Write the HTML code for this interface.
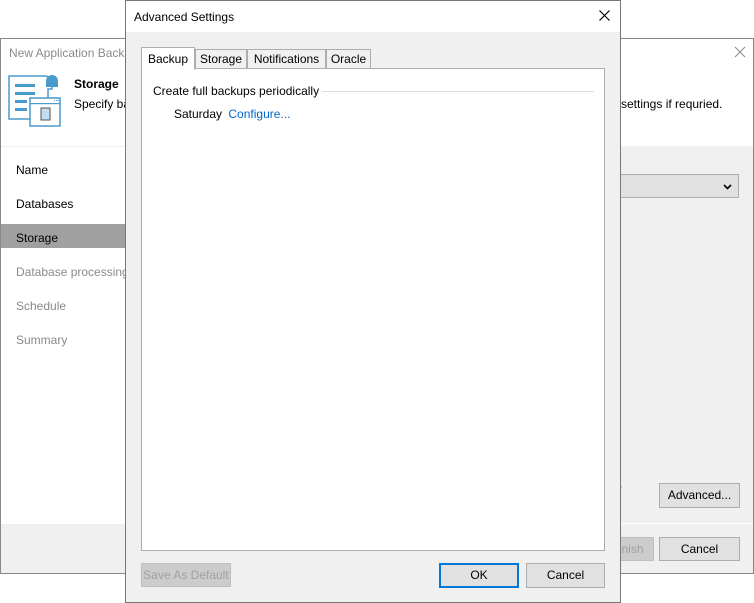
<!DOCTYPE html>
<html><head><style>
*{box-sizing:border-box;margin:0;padding:0}
body{width:754px;height:603px;background:#fff;position:relative;overflow:hidden;font-family:"Liberation Sans",sans-serif;font-size:12px;color:#000}
.a{position:absolute}
.btn{position:absolute;background:#e1e1e1;border:1px solid #adadad;text-align:center;font-size:12px;line-height:22px}
</style></head><body>
<!-- background window -->
<div class="a" style="left:0;top:38px;width:754px;height:536px;border:1px solid #888;background:#f0f0f0">
  <div class="a" style="left:0;top:0;width:752px;height:107px;background:#fff"></div>
  <div class="a" style="left:8px;top:7px;color:#8a8a8a;font-size:12px">New Application Backup</div>
  <svg class="a" style="left:733px;top:7px" width="12" height="12"><path d="M1 1L11 11M11 1L1 11" stroke="#888" stroke-width="1"/></svg>
  <svg class="a" style="left:6px;top:34px" width="54" height="56" viewBox="0 0 54 56">
    <path d="M2 3 h36 a7 7 0 0 1 7 7 v6 h-4 v30 h-39 z" fill="#fff" stroke="#4a9acb" stroke-width="1.5"/>
    <path d="M39 14 v-6 a6 6 0 0 1 12 0 v6z" fill="#4a9acb"/>
    <rect x="8" y="11" width="20" height="3" fill="#4a9acb"/>
    <rect x="8" y="19" width="20" height="3" fill="#4a9acb"/>
    <rect x="8" y="27" width="12" height="3" fill="#4a9acb"/>
    <rect x="8" y="35" width="12" height="3" fill="#4a9acb"/>
    <rect x="23" y="25" width="30" height="28" fill="#fff" stroke="#4a9acb" stroke-width="1.5"/>
    <rect x="47" y="27" width="1" height="1" fill="#4a9acb"/><rect x="49" y="27" width="1" height="1" fill="#4a9acb"/><rect x="51" y="27" width="1" height="1" fill="#4a9acb"/>
    <rect x="23" y="30" width="30" height="1.2" fill="#4a9acb"/>
    <rect x="34" y="35" width="9" height="12" fill="#c4dcef" stroke="#555"/>
  </svg>
  <div class="a" style="left:73px;top:38px;font-weight:bold">Storage</div>
  <div class="a" style="left:73px;top:58px">Specify backup</div>
  <div class="a" style="left:620px;top:58px">settings if requried.</div>
  <div class="a" style="left:0;top:108px;width:124px;height:376px;background:#fff"></div>
  <div class="a" style="left:15px;top:124px">Name</div>
  <div class="a" style="left:15px;top:158px">Databases</div>
  <div class="a" style="left:0;top:185px;width:124px;height:24px;background:#a0a0a0"></div>
  <div class="a" style="left:15px;top:192px">Storage</div>
  <div class="a" style="left:15px;top:226px;color:#8a8a8a">Database processing</div>
  <div class="a" style="left:15px;top:260px;color:#8a8a8a">Schedule</div>
  <div class="a" style="left:15px;top:294px;color:#8a8a8a">Summary</div>
  <div class="a" style="left:610px;top:135px;width:128px;height:24px;background:#e1e1e1;border:1px solid #adadad"></div>
  <svg class="a" style="left:722px;top:145px" width="9" height="6"><path d="M1 1L4.5 4.5L8 1" stroke="#000" stroke-width="1.6" fill="none"/></svg>
  <div class="a" style="left:610px;top:443px">er</div>
  <div class="btn" style="left:658px;top:444px;width:81px;height:25px">Advanced...</div>
  <div class="a" style="left:0;top:484px;width:752px;height:1px;background:#fff"></div>
  <div class="btn" style="left:600px;top:498px;width:53px;height:24px;background:#ccc;border-color:#bfbfbf;color:#a0a0a0">Finish</div>
  <div class="btn" style="left:658px;top:498px;width:81px;height:24px">Cancel</div>
</div>
<!-- dialog -->
<div class="a" style="left:125px;top:0;width:496px;height:603px;border:1px solid #777;background:#f0f0f0">
  <div class="a" style="left:0;top:0;width:494px;height:31px;background:#fff"></div>
  <div class="a" style="left:8px;top:9px">Advanced Settings</div>
  <svg class="a" style="left:473px;top:9px" width="11" height="11"><path d="M0.5 0.5L10.5 10.5M10.5 0.5L0.5 10.5" stroke="#000" stroke-width="1.2"/></svg>
  <div class="a" style="left:15px;top:67px;width:464px;height:483px;background:#fff;border:1px solid #adadad"></div>
  <div class="a" style="left:15px;top:46px;width:54px;height:23px;background:#fff;border:1px solid #adadad;border-bottom:none;text-align:center;line-height:22px">Backup</div>
  <div class="a" style="left:69px;top:48px;width:52px;height:20px;background:#f0f0f0;border:1px solid #adadad;text-align:center;line-height:19px">Storage</div>
  <div class="a" style="left:121px;top:48px;width:79px;height:20px;background:#f0f0f0;border:1px solid #adadad;text-align:center;line-height:19px">Notifications</div>
  <div class="a" style="left:200px;top:48px;width:45px;height:20px;background:#f0f0f0;border:1px solid #adadad;text-align:center;line-height:19px">Oracle</div>
  <div class="a" style="left:27px;top:83px">Create full backups periodically</div>
  <div class="a" style="left:196px;top:90px;width:272px;height:1px;background:#dcdcdc"></div>
  <div class="a" style="left:48px;top:106px">Saturday <span style="color:#0066cc;margin-left:3px">Configure...</span></div>
  <div class="btn" style="left:15px;top:562px;width:90px;height:24px;background:#ccc;border-color:#bfbfbf;color:#a0a0a0">Save As Default</div>
  <div class="btn" style="left:313px;top:562px;width:80px;height:25px;border:2px solid #0078d7;line-height:21px">OK</div>
  <div class="btn" style="left:400px;top:562px;width:79px;height:25px">Cancel</div>
</div>
</body></html>
